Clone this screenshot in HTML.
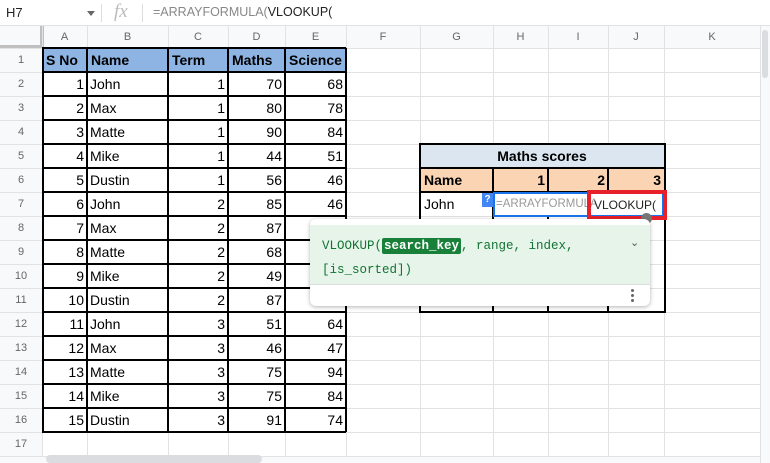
<!DOCTYPE html>
<html><head><style>
*{margin:0;padding:0;box-sizing:border-box}
body{width:770px;height:463px;overflow:hidden;background:#fff;font-family:"Liberation Sans",Arial,sans-serif;position:relative}
.abs{position:absolute}
.hl{position:absolute;height:1px;background:#e2e2e2}
.vl{position:absolute;width:1px;background:#e2e2e2}
.c{position:absolute;font-size:14px;line-height:24px;height:24px;white-space:nowrap;color:#000;padding:0 3px}
.r{text-align:right}
.rh{position:absolute;left:0;width:42px;text-align:center;font-size:11px;color:#666;line-height:24px}
.ch{position:absolute;top:26px;height:22px;line-height:22px;text-align:center;font-size:11px;color:#666}
.b{font-weight:bold}
</style></head><body>
<div class="abs" style="left:0;top:0;width:770px;height:26px;border-bottom:1px solid #e2e2e2;background:#fff"></div>
<div class="abs" style="left:6px;top:5px;font-size:13px;color:#222">H7</div>
<div class="abs" style="left:87px;top:11px;width:0;height:0;border-left:4px solid transparent;border-right:4px solid transparent;border-top:5px solid #666"></div>
<div class="abs" style="left:101px;top:4px;width:1px;height:18px;background:#ddd"></div>
<div class="abs" style="left:114px;top:1px;font-size:19px;font-style:italic;color:#bbb;font-family:'Liberation Serif',serif">fx</div>
<div class="abs" style="left:142px;top:4px;width:1px;height:18px;background:#ddd"></div>
<div class="abs" style="left:153px;top:5px;font-size:12.5px;color:#888">=ARRAYFORMULA(<span style="color:#222">VLOOKUP(</span></div>
<div class="abs" style="left:0;top:26px;width:760px;height:22px;background:#f8f9fa"></div>
<div class="abs" style="left:0;top:26px;width:42px;height:430px;background:#f8f9fa"></div>
<div class="abs" style="left:40px;top:26px;width:4px;height:22px;background:#c0c0c0"></div>
<div class="abs" style="left:0;top:45px;width:44px;height:3px;background:#c0c0c0"></div>
<div id="g"></div>
<script>
var cols=[42,87,168,228,285,346,420,493,548,608,664,760];
var names="ABCDEFGHIJK";
var h='';
for(var i=0;i<cols.length;i++){h+='<div class="vl" style="left:'+cols[i]+'px;top:26px;height:430px"></div>';}
for(var i=0;i<names.length;i++){h+='<div class="ch" style="left:'+cols[i]+'px;width:'+(cols[i+1]-cols[i])+'px">'+names[i]+'</div>';}
for(var r=0;r<=17;r++){var y=48+r*24;if(y>456)y=456;h+='<div class="hl" style="left:0;top:'+y+'px;width:760px"></div>';}
for(var r=1;r<=17;r++){h+='<div class="rh" style="top:'+(48+(r-1)*24)+'px;height:24px">'+r+'</div>';}
var d=[["John",1,70,68],["Max",1,80,78],["Matte",1,90,84],["Mike",1,44,51],["Dustin",1,56,46],["John",2,85,46],["Max",2,87,""],["Matte",2,68,""],["Mike",2,49,""],["Dustin",2,87,""],["John",3,51,64],["Max",3,46,47],["Matte",3,75,94],["Mike",3,75,84],["Dustin",3,91,74]];
h+='<div class="abs" style="left:42px;top:48px;width:304px;height:24px;background:#8eb4e3"></div>';
var hd=["S No","Name","Term","Maths","Science"];
for(var i=0;i<5;i++)h+='<div class="c b" style="left:'+(cols[i]+1)+'px;top:48px">'+hd[i]+'</div>';
for(var k=0;k<15;k++){var y=72+k*24;var row=[k+1,d[k][0],d[k][1],d[k][2],d[k][3]];
for(var i=0;i<5;i++){h+='<div class="c'+(i==1?'':' r')+'" style="left:'+(cols[i])+'px;width:'+(cols[i+1]-cols[i])+'px;top:'+y+'px">'+row[i]+'</div>';}}
for(var i=0;i<6;i++)h+='<div class="abs" style="left:'+(i==0?42:cols[i]-1)+'px;top:48px;width:1.5px;height:384px;background:#000"></div>';
for(var r=0;r<=16;r++)h+='<div class="abs" style="left:42px;top:'+(47+r*24)+'px;width:304px;height:1.5px;background:#000"></div>';
document.getElementById('g').innerHTML=h;
</script>
<div class="abs" style="left:420px;top:144px;width:244px;height:24px;background:#dce6f1"></div>
<div class="abs" style="left:420px;top:168px;width:244px;height:24px;background:#fbd4b4"></div>
<div class="c b" style="left:420px;top:144px;width:244px;text-align:center">Maths scores</div>
<div class="c b" style="left:421px;top:168px">Name</div>
<div class="c b r" style="left:493px;top:168px;width:55px">1</div>
<div class="c b r" style="left:548px;top:168px;width:60px">2</div>
<div class="c b r" style="left:608px;top:168px;width:56px">3</div>
<div class="c" style="left:421px;top:192px">John</div>
<div class="abs" style="left:419px;top:143px;width:246px;height:1.5px;background:#000"></div>
<div class="abs" style="left:419px;top:167px;width:246px;height:1.5px;background:#000"></div>
<div class="abs" style="left:419px;top:191px;width:246px;height:1.5px;background:#000"></div>
<div class="abs" style="left:419px;top:311px;width:246px;height:1.5px;background:#000"></div>
<div class="abs" style="left:419px;top:143px;width:1.5px;height:170px;background:#000"></div>
<div class="abs" style="left:664px;top:143px;width:1.5px;height:170px;background:#000"></div>
<div class="abs" style="left:492px;top:168px;width:1.5px;height:144px;background:#000"></div>
<div class="abs" style="left:547px;top:168px;width:1.5px;height:144px;background:#000"></div>
<div class="abs" style="left:607px;top:168px;width:1.5px;height:144px;background:#000"></div>
<div class="abs" style="left:493px;top:192px;width:171px;height:25px;background:#fff;border:2px solid #1a73e8"></div>
<div class="abs" style="left:482px;top:193px;width:11px;height:14px;background:#4285f4;color:#fff;font-size:10px;font-weight:bold;text-align:center;line-height:14px">?</div>
<div class="abs" style="left:496px;top:198px;font-size:11.5px;color:#999">=ARRAYFORMULA</div>
<div class="abs" style="left:587px;top:190px;width:80px;height:30px;border:4px solid #e8202a"></div>
<div class="abs" style="left:594px;top:198px;font-size:12px;color:#222">VLOOKUP(</div>
<div class="abs" style="left:641px;top:213px;width:11px;height:11px;border-radius:50%;background:#777"></div>
<div class="abs" style="left:310px;top:219px;width:340px;height:87px;background:#fff;border-radius:6px;box-shadow:0 1px 4px rgba(0,0,0,.3)"></div>
<div class="abs" style="left:310px;top:225px;width:340px;height:60px;background:#e6f4ea;border-bottom:1px solid #ddd"></div>
<div class="abs" style="left:322px;top:234px;font-family:'Liberation Mono',monospace;font-size:12.5px;color:#137333;line-height:24px;width:300px">VLOOKUP(<span style="background:#188038;color:#fff;font-weight:bold;padding:1px 2px;border-radius:2px">search_key</span>, range, index,<br>[is_sorted])</div>
<div class="abs" style="left:630px;top:236px;font-size:11px;color:#555">&#8964;</div>
<div class="abs" style="left:631px;top:289px;width:3px;height:3px;border-radius:50%;background:#666;box-shadow:0 5px 0 #666,0 10px 0 #666"></div>
<div class="abs" style="left:760px;top:26px;width:10px;height:437px;background:#f8f9fa;border-left:1px solid #e2e2e2"></div>
<div class="abs" style="left:762px;top:30px;width:6px;height:48px;border-radius:3px;background:#dadce0"></div>
<div class="abs" style="left:0;top:456px;width:760px;height:7px;background:#f8f9fa;border-top:1px solid #e2e2e2"></div>
<div class="abs" style="left:46px;top:455px;width:216px;height:8px;border-radius:4px;background:#dadce0"></div>
</body></html>
